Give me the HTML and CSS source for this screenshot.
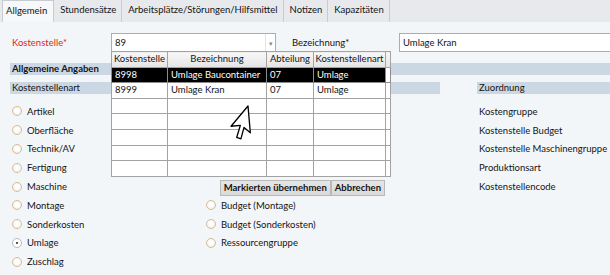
FILE: index.html
```html
<!DOCTYPE html>
<html lang="de">
<head>
    <meta charset="UTF-8">
    <meta name="viewport" content="width=device-width, initial-scale=1.0">
    <title>Kostenstelle</title>
    <link rel="stylesheet" href="styles.css">
</head>
<body>
    <div class="tabs">
        <div class="tab active">Allgemein</div>
        <div class="tab">Stundensätze</div>
        <div class="tab">Arbeitsplätze/Störungen/Hilfsmittel</div>
        <div class="tab">Notizen</div>
        <div class="tab">Kapazitäten</div>
    </div>

    <div class="form">
        <div class="row-top">
            <label class="lbl req">Kostenstelle*</label>
            <div class="combo">
                <span class="combo-val">89</span>
                <span class="combo-btn">&#9662;</span>

                <div class="dropdown">
                    <table class="grid">
                        <colgroup>
                            <col class="c1"><col class="c2"><col class="c3"><col class="c4"><col class="c5">
                        </colgroup>
                        <tr class="hdr">
                            <th>Kostenstelle</th><th>Bezeichnung</th><th>Abteilung</th><th>Kostenstellenart</th><th></th>
                        </tr>
                        <tr class="sel">
                            <td>8998</td><td>Umlage Baucontainer</td><td>07</td><td>Umlage</td><td class="gap"></td>
                        </tr>
                        <tr>
                            <td>8999</td><td>Umlage Kran</td><td>07</td><td>Umlage</td><td class="gap"></td>
                        </tr>
                        <tr><td></td><td></td><td></td><td></td><td class="gap"></td></tr>
                        <tr><td></td><td></td><td></td><td></td><td class="gap"></td></tr>
                        <tr><td></td><td></td><td></td><td></td><td class="gap"></td></tr>
                        <tr><td></td><td></td><td></td><td></td><td class="gap"></td></tr>
                        <tr><td></td><td></td><td></td><td></td><td class="gap"></td></tr>
                    </table>
                    <div class="dd-buttons">
                        <button>Markierten übernehmen</button><button>Abbrechen</button>
                    </div>
                </div>
            </div>
            <label class="lbl lbl-bez">Bezeichnung*</label>
            <div class="input">Umlage Kran</div>
        </div>

        <div class="band band-main">Allgemeine Angaben</div>
        <div class="subheads">
            <div class="band band-art">Kostenstellenart</div>
            <div class="band band-zu">Zuordnung</div>
        </div>

        <div class="options">
            <div class="col col-left">
                <div class="opt"><span class="radio"></span>Artikel</div>
                <div class="opt"><span class="radio"></span>Oberfläche</div>
                <div class="opt"><span class="radio"></span>Technik/AV</div>
                <div class="opt"><span class="radio"></span>Fertigung</div>
                <div class="opt"><span class="radio"></span>Maschine</div>
                <div class="opt"><span class="radio"></span>Montage</div>
                <div class="opt"><span class="radio"></span>Sonderkosten</div>
                <div class="opt"><span class="radio checked"></span>Umlage</div>
                <div class="opt"><span class="radio"></span>Zuschlag</div>
            </div>
            <div class="col col-mid">
                <div class="opt"><span class="radio"></span>Budget (Montage)</div>
                <div class="opt"><span class="radio"></span>Budget (Sonderkosten)</div>
                <div class="opt"><span class="radio"></span>Ressourcengruppe</div>
            </div>
            <div class="col col-right">
                <div class="opt">Kostengruppe</div>
                <div class="opt">Kostenstelle Budget</div>
                <div class="opt">Kostenstelle Maschinengruppe</div>
                <div class="opt">Produktionsart</div>
                <div class="opt">Kostenstellencode</div>
            </div>
        </div>
    </div>

    <svg class="cursor" width="40" height="45" viewBox="0 0 40 45">
        <path d="M0,0 L0,16 L4,12 L7,19 L9.5,18 L6.5,11.5 L11.5,11.5 Z" transform="translate(28 5) rotate(40) scale(1.65)"
              fill="#fff" stroke="#000" stroke-width="0.8" stroke-linejoin="round"/>
    </svg>
</body>
</html>
```

FILE: styles.css
```css
/* Kostenstelle - Allgemein */
body {
    margin: 0;
    background: #f3f6f9;
    color: #141414;
    font-family: Lato, "Noto Sans", sans-serif;
    font-size: 9.5px;
    position: relative;
    height: 275px;
    overflow: hidden;
}
.tabs {
    display: flex;
    height: 22px;
    background: #e7e9ec;
    padding-left: 2px;
    box-sizing: border-box;
}
.tab {
    padding: 0 5px 0 6px;
    line-height: 20px;
    border-right: 1px solid #c8ccd2;
}
.tab.active {
    background: #f6f8fa;
    border: 1px solid #c8ccd2;
    border-bottom: none;
    padding: 0 6px 0 3px;
    height: 22px;
    box-sizing: border-box;
}
.form {
    padding-left: 10px;
}
.row-top {
    display: flex;
    align-items: center;
    margin-top: 11px;
    height: 19px;
}
.lbl {
    width: 99px;
    padding-left: 2px;
}
.req {
    color: #e3211c;
}
.combo {
    position: relative;
    width: 165px;
    height: 19px;
    box-sizing: border-box;
    border: 1px solid #abadb3;
    background: #fff;
    display: flex;
    align-items: center;
}
.combo-val {
    flex: 1;
    padding-left: 3px;
}
.combo-btn {
    width: 9px;
    height: 17px;
    border-left: 1px solid #e2e3e6;
    color: #8a8a8a;
    font-size: 7px;
    line-height: 19px;
    text-align: center;
}
.lbl-bez {
    width: 107px;
    margin-left: 16px;
    padding-left: 0;
}
.input {
    flex: 1;
    height: 19px;
    box-sizing: border-box;
    border: 1px solid #abadb3;
    border-right: none;
    background: #fff;
    line-height: 17px;
    padding-left: 3px;
}
.band {
    background: #ccd7e4;
    height: 12px;
    line-height: 12px;
    padding-left: 2px;
}
.band-main {
    margin-top: 11px;
    font-weight: bold;
}
.subheads {
    display: flex;
    margin-top: 7px;
}
.band-art {
    width: 428px;
}
.band-zu {
    flex: 1;
    margin-left: 37px;
}
.options {
    display: flex;
    margin-top: 8px;
    padding-left: 2px;
}
.col-left {
    width: 194px;
}
.col-mid {
    width: 273px;
    margin-top: 94px;
}
.opt {
    height: 18.8px;
    display: flex;
    align-items: center;
    white-space: nowrap;
}
.radio {
    width: 10px;
    height: 10px;
    box-sizing: border-box;
    border-radius: 50%;
    border: 1px solid #d6bc9c;
    background: radial-gradient(circle at 50% 45%, #ffffff 30%, #efe5d8 100%);
    margin-right: 5px;
    position: relative;
}
.radio.checked {
    border-color: #b9b9b9;
    background: #fff;
}
.radio.checked::after {
    content: "";
    position: absolute;
    left: 3px;
    top: 3px;
    width: 2px;
    height: 2px;
    border-radius: 50%;
    background: #222;
}

/* dropdown */
.dropdown {
    position: absolute;
    top: 17px;
    left: -1px;
    width: 279px;
    z-index: 5;
}
.grid {
    border-collapse: collapse;
    table-layout: fixed;
    width: 279px;
    background: #fff;
}
.grid .c1 { width: 56px; }
.grid .c2 { width: 99px; }
.grid .c3 { width: 47px; }
.grid .c4 { width: 72px; }
.grid .c5 { width: 5px; }
.grid tr {
    height: 15.6px;
}
.grid th, .grid td {
    border: 1px solid #a3a3a3;
    padding: 0 3px;
    line-height: 12px;
    white-space: nowrap;
    overflow: hidden;
    text-align: left;
}
.grid th {
    background: linear-gradient(#f8f8f8, #e4e4e4);
    font-weight: normal;
    text-align: center;
    padding: 0 1px;
}
.grid td.gap, .grid th:last-child {
    padding: 0;
}
.grid tr.sel td {
    background: #000;
    color: #fff;
    border-color: #8c8c8c;
}
.grid tr.sel td.gap {
    background: #fff;
}
.dd-buttons {
    display: flex;
    justify-content: flex-end;
    margin-top: 3px;
    padding-right: 5px;
}
.dd-buttons button {
    font-family: inherit;
    font-size: 9.5px;
    font-weight: bold;
    color: #141414;
    height: 16px;
    padding: 0 3px;
    background: linear-gradient(#e6e6e6, #d9d9d9);
    border: 1px solid #b9b9b9;
    border-radius: 0;
    margin: 0;
}
.cursor {
    position: absolute;
    left: 220px;
    top: 101px;
    z-index: 10;
}
```
